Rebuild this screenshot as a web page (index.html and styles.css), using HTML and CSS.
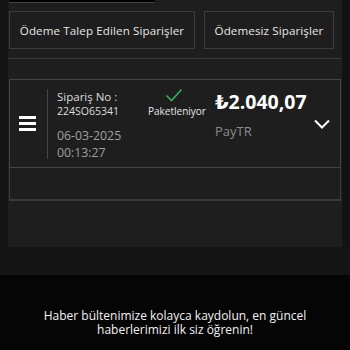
FILE: index.html
```html
<!DOCTYPE html>
<html lang="tr">
<head>
<meta charset="utf-8">
<link rel="stylesheet" href="styles.css">
</head>
<body>
<div class="panel">
  <div class="search"></div>
  <div class="tabs">
    <button class="tab tab-wide">Ödeme Talep Edilen Siparişler</button>
    <button class="tab tab-narrow">Ödemesiz Siparişler</button>
  </div>
  <div class="bar"></div>
  <div class="order">
    <div class="menu">
      <span></span><span></span><span></span>
    </div>
    <div class="info">
      <div class="label">Sipariş No :</div>
      <div class="no">224SO65341</div>
      <div class="date">06-03-2025</div>
      <div class="time">00:13:27</div>
    </div>
    <div class="status">
      <svg class="check" width="18" height="14" viewBox="0 0 18 14"><path d="M1.5 7.5 L6.5 12.5 L16.5 1.5" fill="none" stroke="#2fb457" stroke-width="1.6"/></svg>
      <div class="status-text">Paketleniyor</div>
    </div>
    <div class="amount">
      <div class="price">₺2.040,07</div>
      <div class="method">PayTR</div>
    </div>
    <svg class="chev" width="16" height="10" viewBox="0 0 16 10"><path d="M1 1.5 L8 8.5 L15 1.5" fill="none" stroke="#fff" stroke-width="2"/></svg>
  </div>
  <div class="detail"></div>
  <div class="rest"></div>
</div>
<div class="gap"></div>
<footer class="footer">
  <p>Haber bültenimize kolayca kaydolun, en güncel haberlerimizi ilk siz öğrenin!</p>
</footer>
</body>
</html>
```
FILE: styles.css
```css
html, body {
  margin: 0;
  padding: 0;
  background: #131313;
  font-family: "Open Sans", "DejaVu Sans", sans-serif;
}
.panel {
  margin: 0 8px;
  background: #1e1e1e;
  height: 247px;
  display: flex;
  flex-direction: column;
}
.search {
  width: 146px;
  height: 2px;
  margin-left: 1px;
  background: #000;
  border-bottom: 1px solid #444;
}
.tabs {
  display: flex;
  gap: 9px;
  margin-top: 8px;
  padding-left: 1px;
}
.tab {
  height: 38px;
  box-sizing: border-box;
  background: #1e1e1e;
  border: 1px solid #3c3c3c;
  color: #e6e6e6;
  font-family: inherit;
  font-size: 11.6px;
  letter-spacing: 0.1px;
  padding: 0;
  white-space: nowrap;
  text-align: center;
}
.tab-wide { width: 186px; }
.tab-narrow { width: 130px; }
.bar {
  margin-top: 9px;
  height: 20px;
  border-top: 1px solid #393939;
  background: #1f1f1f;
}
.order {
  margin: 0 1px;
  height: 89px;
  box-sizing: border-box;
  border: 1px solid #444;
  display: flex;
  align-items: center;
}
.menu {
  width: 38px;
  height: 70px;
  border-right: 1px solid #444;
  display: flex;
  flex-direction: column;
  justify-content: center;
  gap: 3px;
  padding-left: 9px;
  box-sizing: border-box;
}
.menu span {
  display: block;
  width: 17px;
  height: 3px;
  background: #fff;
}
.info {
  padding-left: 9px;
  width: 82px;
  color: #ddd;
  font-size: 11px;
  align-self: flex-start;
  padding-top: 10px;
}
.label { line-height: 14px; font-size: 11.5px; }
.no { line-height: 14px; font-size: 10.5px; }
.date, .time {
  font-size: 12.3px;
  line-height: 16.8px;
  color: #a0a0a0;
}
.date { margin-top: 10px; }
.status {
  width: 76px;
  display: flex;
  flex-direction: column;
  align-items: center;
  align-self: flex-start;
  padding-top: 8px;
}
.check { margin-right: 6px; }
.status-text {
  color: #e6e6e6;
  font-size: 10px;
  margin-top: 2px;
}
.amount {
  align-self: flex-start;
  padding-top: 10px;
}
.price {
  color: #fff;
  font-weight: 700;
  font-size: 19.5px;
  line-height: 24px;
}
.method {
  color: #8a8a8a;
  font-size: 13px;
  margin-top: 8px;
}
.chev {
  margin-left: auto;
  margin-right: 10px;
}
.detail {
  margin: 0 1px;
  height: 33px;
  box-sizing: border-box;
  border: 1px solid #3c3c3c;
  border-top: none;
  border-bottom: 2px solid #3a3a3a;
}
.rest { flex: 1; }
.gap {
  height: 28px;
  background: #141414;
}
.footer {
  background: #050505;
  height: 75px;
  margin: 0;
  display: flex;
  align-items: flex-start;
  justify-content: center;
}
.footer p {
  margin: 34px 30px 0;
  color: #f2f2f2;
  font-size: 12px;
  font-weight: 500;
  line-height: 14px;
  text-align: center;
}
```
